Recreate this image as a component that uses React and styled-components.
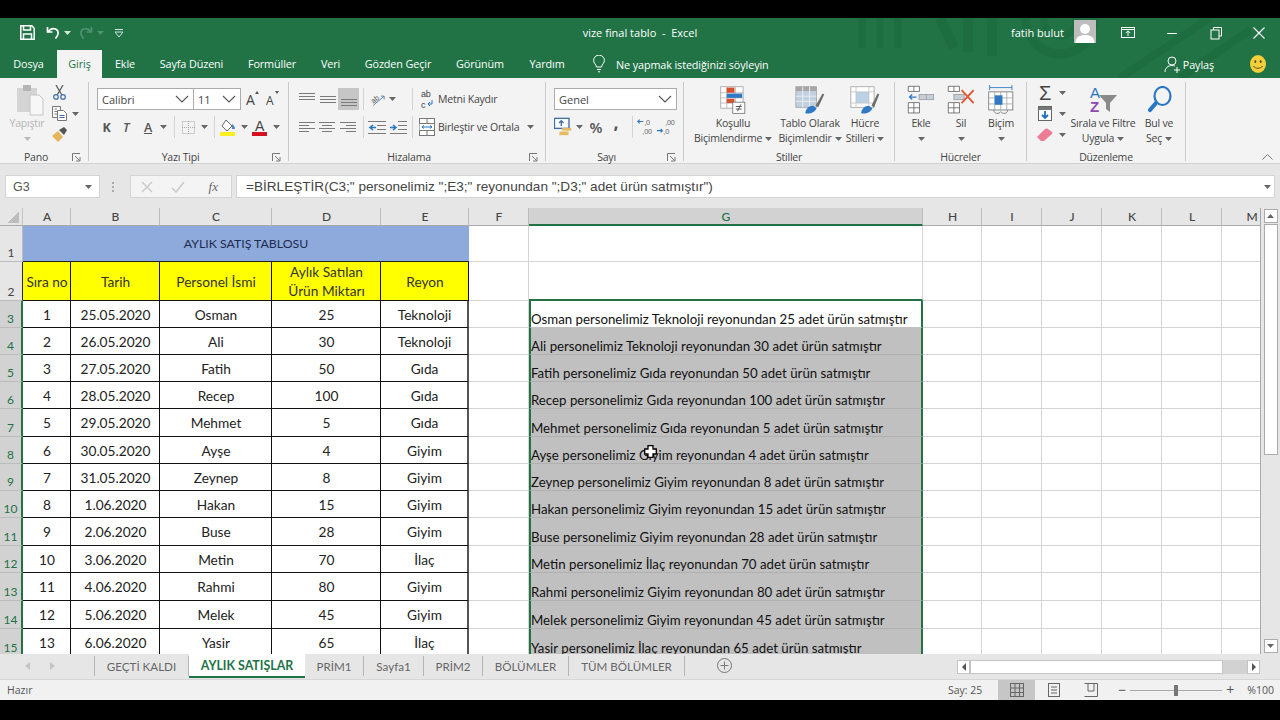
import React from 'react';
import styled, { createGlobalStyle } from 'styled-components';

const GlobalStyle = createGlobalStyle`
html, body {
    margin:0;
    padding:0;
    background:#000;
}
#root {
    width:1280px;
    height:720px;
    overflow:hidden;
}
`;

const UI_FONT = `"Open Sans", "Liberation Sans", sans-serif`;
const CELL_FONT = `Lato, "Liberation Sans", sans-serif`;
const GREEN = '#217346';

const data = [
    [1, '25.05.2020', 'Osman', 25, 'Teknoloji'],
    [2, '26.05.2020', 'Ali', 30, 'Teknoloji'],
    [3, '27.05.2020', 'Fatih', 50, 'Gıda'],
    [4, '28.05.2020', 'Recep', 100, 'Gıda'],
    [5, '29.05.2020', 'Mehmet', 5, 'Gıda'],
    [6, '30.05.2020', 'Ayşe', 4, 'Giyim'],
    [7, '31.05.2020', 'Zeynep', 8, 'Giyim'],
    [8, '1.06.2020', 'Hakan', 15, 'Giyim'],
    [9, '2.06.2020', 'Buse', 28, 'Giyim'],
    [10, '3.06.2020', 'Metin', 70, 'İlaç'],
    [11, '4.06.2020', 'Rahmi', 80, 'Giyim'],
    [12, '5.06.2020', 'Melek', 45, 'Giyim'],
    [13, '6.06.2020', 'Yasir', 65, 'İlaç'],
];

const columns = ['A', 'B', 'C', 'D', 'E', 'F', 'G', 'H', 'I', 'J', 'K', 'L', 'M'];
const headers = ['Sıra no', 'Tarih', 'Personel İsmi', <>Aylık Satılan<br />Ürün Miktarı</>, 'Reyon'];
const ribbonTabs = [
    ['Dosya', 57], ['Giriş', 45], ['Ekle', 46], ['Sayfa Düzeni', 87], ['Formüller', 74],
    ['Veri', 43], ['Gözden Geçir', 92], ['Görünüm', 72], ['Yardım', 62],
];
const sheets = [
    ['GEÇTİ KALDI', 94], ['AYLIK SATIŞLAR', 116], ['PRİM1', 59], ['Sayfa1', 60],
    ['PRİM2', 59], ['BÖLÜMLER', 86], ['TÜM BÖLÜMLER', 116],
];

/* ---- small drawings ---- */

const Caret = ({ color = '#666' }) => (
    <svg width="7" height="4" viewBox="0 0 7 4"><path d="M0 0h7L3.5 4z" fill={color} /></svg>
);

const Chevron = () => (
    <svg width="14" height="8" viewBox="0 0 14 8"><path d="M1 1l6 6 6-6" fill="none" stroke="#555" strokeWidth="1.1" /></svg>
);

const Launcher = () => (
    <svg width="9" height="9" viewBox="0 0 9 9" fill="none" stroke="#777" strokeWidth="1">
        <path d="M.5 8V.5H8" /><path d="M3 3l4.5 4.5M4 8h4V4" />
    </svg>
);

const Lines = ({ rows, w = 16, h = 16 }) => (
    <svg width={w} height={h} viewBox={`0 0 ${w} ${h}`} stroke="#7a7a7a" strokeWidth="1">
        {rows.map(([y, x1, x2]) => <path key={y} d={`M${x1} ${y}.5H${x2}`} />)}
    </svg>
);

const Indent = ({ flip }) => (
    <svg width="18" height="14" viewBox="0 0 18 14">
        <g stroke="#7a7a7a"><path d={flip ? 'M9 1.5h9M9 5.5h9M9 9.5h9M1 13.5h17' : 'M0 1.5h18M9 5.5h9M9 9.5h9M0 13.5h18'} /></g>
        <path d={flip ? 'M1 7.5h5M4 5l3 2.5L4 10' : 'M8 7.5H2M5 5L2 7.5 5 10'} fill="none" stroke="#2a76c6" strokeWidth="1.6" />
    </svg>
);

const SaveIcon = () => (
    <svg width="15" height="15" viewBox="0 0 15 15" fill="none" stroke="#fff" strokeWidth="1.5">
        <path d="M.8.8h11l2.4 2.4v11H.8z" /><path d="M3.5 1v4h7V1M3.5 14V9h8v5" />
    </svg>
);

const UndoIcon = ({ color = '#fff', flip }) => (
    <svg width="15" height="13" viewBox="0 0 15 13" fill="none" stroke={color} strokeWidth="1.7" style={flip ? { transform: 'scaleX(-1)' } : undefined}>
        <path d="M1.5 1v5h5" /><path d="M2 6c2-3 5-4 7.5-3 3.5 1.5 3.5 6 0 9.5" />
    </svg>
);

const QatMenu = () => (
    <svg width="8" height="8" viewBox="0 0 8 8"><path d="M0 .5h8" stroke="#cfe3d7" /><path d="M0 3h8L4 8z" fill="none" stroke="#cfe3d7" /></svg>
);

const Avatar = () => (
    <svg width="22" height="23" viewBox="0 0 22 23">
        <rect width="22" height="23" fill="#bdbdbd" />
        <circle cx="11" cy="9" r="5" fill="#fff" />
        <path d="M1.5 23c0-6 4-8 9.5-8s9.5 2 9.5 8z" fill="#fff" />
    </svg>
);

const WindowIcon = ({ kind }) => (
    <svg width="14" height="14" viewBox="0 0 14 14" fill="none" stroke="#fff" strokeWidth="1">
        {kind === 'ribbon' && <><rect x=".5" y="1.5" width="13" height="10" /><path d="M.5 3.5h13M7 10V5M4.8 7L7 4.8 9.2 7" /></>}
        {kind === 'min' && <path d="M2 7.5h10" />}
        {kind === 'restore' && <><rect x="2" y="4" width="8" height="9" /><path d="M4.5 4V1.5h8V10H10" /></>}
        {kind === 'close' && <path d="M1.5 1.5l11 11M12.5 1.5l-11 11" strokeWidth="1.1" />}
    </svg>
);

const BulbIcon = () => (
    <svg width="12" height="18" viewBox="0 0 12 18" fill="none" stroke="#fff" strokeWidth="1">
        <path d="M3.5 12C3 9 .6 8 .6 5.5a5.4 5.4 0 0 1 10.8 0C11.4 8 9 9 8.5 12z" /><path d="M4 14.5h4M5 16.8h2" />
    </svg>
);

const ShareIcon = () => (
    <svg width="16" height="17" viewBox="0 0 16 17" fill="none" stroke="#fff" strokeWidth="1">
        <circle cx="8" cy="5" r="4" /><path d="M1 16c0-4 3-6.5 7-6.5 1 0 2 .2 2.8.5M10 14h6M13 11v6" />
    </svg>
);

const Smile = () => (
    <svg width="16" height="18" viewBox="0 0 16 18">
        <ellipse cx="8" cy="9" rx="8" ry="9" fill="#f2cf3b" />
        <ellipse cx="5.3" cy="6.5" rx="1" ry="1.5" fill="#5d5020" /><ellipse cx="10.7" cy="6.5" rx="1" ry="1.5" fill="#5d5020" />
        <path d="M3.5 11c1.5 3 7.5 3 9 0" fill="none" stroke="#5d5020" />
    </svg>
);

const PasteIcon = () => (
    <svg width="36" height="33" viewBox="-6 0 36 33">
        <rect x="2" y="5" width="20" height="24" fill="#d4d4d4" />
        <rect x="8" y="2" width="8" height="6" fill="#b5b5b5" />
        <path d="M15 12h9l4 4v16H15z" fill="#f7f7f7" stroke="#c4c4c4" />
    </svg>
);

const ScissorsIcon = () => (
    <svg width="15" height="15" viewBox="0 0 16 17" fill="none">
        <path d="M4 0l6.5 11M12 0L5.5 11" stroke="#555" strokeWidth="1.4" />
        <circle cx="4" cy="13.5" r="2.6" stroke="#3f6fa8" strokeWidth="1.4" /><circle cx="12" cy="13.5" r="2.6" stroke="#3f6fa8" strokeWidth="1.4" />
    </svg>
);

const CopyIcon = () => (
    <svg width="15" height="15" viewBox="0 0 15 15" fill="#fff" stroke="#777">
        <path d="M.5.5h8v11h-8z" /><path d="M2.5 3H5M2.5 5.5h4M2.5 8h4" fill="none" />
        <path d="M5.5 4.5h6l3 3v7h-9z" /><path d="M7.5 9.5h5M7.5 11.5h5" fill="none" stroke="#3f6fa8" />
    </svg>
);

const BrushIcon = () => (
    <svg width="15" height="15" viewBox="0 0 15 15">
        <path d="M0 9l6-5 5 6-5 5z" fill="#e5b65c" /><path d="M7 3l5-3 3 3-3 5z" fill="#555" />
    </svg>
);

const GrowA = ({ up }) => (
    <svg width="15" height="18" viewBox="0 0 15 18">
        <text x="0" y="15" fontFamily={UI_FONT} fontSize={up ? 14 : 12} fill="#444">A</text>
        <path d={up ? 'M9 4l2-3 2 3z' : 'M9 1h4l-2 3z'} fill="#555" />
    </svg>
);

const BorderIcon = () => (
    <svg width="13" height="13" viewBox="0 0 13 13" fill="none" stroke="#a5a5a5" strokeDasharray="1 1">
        <rect x=".5" y=".5" width="12" height="12" /><path d="M6.5 0v13M0 6.5h13" />
    </svg>
);

const FillIcon = () => (
    <svg width="16" height="17" viewBox="0 0 16 17">
        <path d="M6 1l6 6-5 5-5-5z" fill="#fff" stroke="#666" /><path d="M12 5c2 1 3 3 3 5h-3z" fill="#4c87c7" />
        <rect y="13" width="15" height="4" fill="#ffef20" />
    </svg>
);

const ColorA = () => (
    <svg width="16" height="19" viewBox="0 0 16 19">
        <text x="3" y="13" fontFamily="Liberation Sans" fontSize="14" fill="#444">A</text>
        <rect y="14" width="15" height="4" fill="#d5101f" />
    </svg>
);

const OrientIcon = () => (
    <svg width="22" height="22" viewBox="-2 -3 22 22">
        <path d="M3 16L16 5M12.5 4.5h4v4" fill="none" stroke="#3f6fa8" />
        <text x="1" y="11" fontFamily="Liberation Sans" fontSize="9" fill="#555" transform="rotate(-38 6 9)">ab</text>
    </svg>
);

const WrapIcon = () => (
    <svg width="15" height="22" viewBox="0 0 15 22">
        <text x="1" y="9" fontFamily="Liberation Sans" fontSize="9" fill="#444">ab</text>
        <text x="1" y="19.5" fontFamily="Liberation Sans" fontSize="9" fill="#444">c</text>
        <path d="M12 12v4H8M10 14l-2 2 2 2" fill="none" stroke="#2a76c6" />
    </svg>
);

const MergeIcon = () => (
    <svg width="16" height="18" viewBox="0 0 16 18" fill="#fff" stroke="#777">
        <rect x=".5" y=".5" width="15" height="17" /><path d="M.5 5.5h15v7H.5M8 .5v5M8 12.5v5" />
        <path d="M3 9h10M5 7.5L3 9l2 1.5M11 7.5L13 9l-2 1.5" fill="none" stroke="#2a76c6" />
    </svg>
);

const CurrencyIcon = () => (
    <svg width="22" height="20" viewBox="0 0 22 20">
        <rect x=".5" y=".5" width="16" height="11" fill="#fff" stroke="#3f6fa8" strokeWidth="1.5" />
        <path d="M8 9V3M5.5 5.5L8 3l2.5 2.5" fill="none" stroke="#3f6fa8" strokeWidth="1.5" />
        <rect x="9" y="11" width="10" height="3" fill="#e5bb5f" /><rect x="6" y="15" width="10" height="4" fill="#e5bb5f" />
    </svg>
);

const DecimalIcon = ({ top, bottom, arrowRight }) => (
    <svg width="22" height="22" viewBox="0 0 22 22">
        <text x="9" y="9" fontFamily="Liberation Sans" fontSize="8" fill="#666">{top}</text>
        <text x="7" y="18.5" fontFamily="Liberation Sans" fontSize="8" fill="#666">{bottom}</text>
        <path d={arrowRight ? 'M0 15h6M4 13l2 2-2 2' : 'M8 5H2M4 3L2 5l2 2'} fill="none" stroke="#2a76c6" strokeWidth="1.2" />
    </svg>
);

const Sheetlet = ({ children, w = 32, h = 34 }) => (
    <svg width={w * 0.86} height={h * 0.86} viewBox={`0 0 ${w} ${h}`}>{children}</svg>
);

const ConditionalIcon = () => (
    <Sheetlet>
        <rect x="2" y="2" width="26" height="25" fill="#fff" stroke="#a6a6a6" />
        <path d="M2 9h26M2 15h26M2 21h26M9 2v25M19 2v25" stroke="#b5b5b5" />
        <rect x="9" y="3" width="9" height="6" fill="#d7512f" /><rect x="9" y="10" width="18" height="5" fill="#2f79c5" /><rect x="9" y="16" width="9" height="5" fill="#d7512f" />
        <rect x="16" y="20" width="14" height="13" fill="#fff" stroke="#777" />
        <path d="M19.5 25h7M19.5 28h7M25.5 22.5l-4 8" fill="none" stroke="#444" />
    </Sheetlet>
);

const TableIcon = () => (
    <Sheetlet w={34}>
        <rect x="1" y="2" width="24" height="24" fill="#c2cfdf" stroke="#a6a6a6" />
        <rect x="1" y="2" width="24" height="5" fill="#a6a6a6" />
        <path d="M1 13h24M1 19h24M9 2v24M17 2v24" stroke="#eef2f6" />
        <path d="M24 24L32 10l2 1-7 15z" fill="#6d6d6d" />
        <path d="M12 33c0-5 4-9 9-9l4 3c-1 4-7 7-13 6z" fill="#2f79c5" />
    </Sheetlet>
);

const CellStyleIcon = () => (
    <Sheetlet w={34}>
        <rect x="1" y="2" width="27" height="24" fill="#fff" stroke="#a6a6a6" />
        <rect x="7" y="8" width="15" height="13" fill="#bcd0e6" />
        <path d="M7 2v24M22 2v24M1 8h27M1 21h27" stroke="#c4c4c4" />
        <path d="M25 24L32 10l2 1-6 15z" fill="#6d6d6d" />
        <path d="M13 33c0-5 4-9 9-9l4 3c-1 4-7 7-13 6z" fill="#2f79c5" />
    </Sheetlet>
);

const InsertIcon = () => (
    <Sheetlet>
        <path d="M1.5 1.5h13v6h-13zM8 1.5v6M1.5 20.5h13v12h-13zM1.5 26.5h13M8 20.5v12" fill="#fff" stroke="#666" />
        <rect x="14" y="11" width="17" height="6" fill="#c7ced6" stroke="#9aa2aa" />
        <path d="M22.5 11v6" stroke="#9aa2aa" />
        <path d="M11 14H3M6 11l-3 3 3 3" fill="none" stroke="#2a76c6" strokeWidth="1.5" />
    </Sheetlet>
);

const DeleteIcon = () => (
    <Sheetlet>
        <path d="M1.5 1.5h13v6h-13zM8 1.5v6M1.5 20.5h13v12h-13zM1.5 26.5h13M8 20.5v12" fill="#fff" stroke="#666" />
        <rect x="8" y="11" width="12" height="6" fill="#c7ced6" stroke="#9aa2aa" />
        <path d="M17 6l14 15M31 6L17 21" stroke="#e2572f" strokeWidth="2.2" />
    </Sheetlet>
);

const FormatIcon = () => (
    <Sheetlet>
        <path d="M3 3h26M3 0v6M29 0v6" stroke="#2a76c6" />
        <rect x="2" y="8" width="28" height="21" fill="#fff" stroke="#777" />
        <path d="M9 8v21M16 8v21M23 8v21M2 15h28M2 22h28" stroke="#a9a9a9" />
        <rect x="9" y="12" width="9" height="11" fill="#2f79c5" />
        <path d="M8 29c0 5 6 5 8 2 2 3 8 3 8-2" fill="none" stroke="#777" />
    </Sheetlet>
);

const FillDown = () => (
    <svg width="14" height="15" viewBox="0 0 14 15">
        <rect x=".5" y=".5" width="13" height="14" fill="#fff" stroke="#666" />
        <rect x="1" y="1" width="12" height="3" fill="#777" />
        <path d="M7 5v7M4 9l3 3 3-3" fill="none" stroke="#1e6fc2" strokeWidth="1.8" />
    </svg>
);

const Eraser = () => (
    <svg width="16" height="14" viewBox="0 0 16 14"><path d="M0 9l8-8q2-1 3 0l4 3q1 1 0 2l-8 7H4z" fill="#ec7d95" /></svg>
);

const SortIcon = () => (
    <svg width="28" height="32" viewBox="0 -2 28 32">
        <path d="M10 9h18l-7 8v9l-4-3v-6z" fill="#8a8a8a" />
        <text x="1" y="12" fontFamily="Liberation Sans" fontSize="15" fill="#2a76c6">A</text>
        <text x="1" y="26" fontFamily="Liberation Sans" fontSize="15" fontWeight="700" fill="#8b49b0">Z</text>
    </svg>
);

const FindIcon = () => (
    <svg width="25" height="27" viewBox="0 0 25 27" fill="none">
        <ellipse cx="15.5" cy="10" rx="8" ry="9" stroke="#2a76c6" strokeWidth="2.2" />
        <path d="M9 17l-6 7" stroke="#2a76c6" strokeWidth="4.2" strokeLinecap="round" />
    </svg>
);

const CrossCursor = () => (
    <svg width="13" height="13" viewBox="0 0 13 13">
        <path d="M4 .7h5V4h3.3v5H9v3.3H4V9H.7V4H4z" fill="#fff" stroke="#000" strokeWidth="1.3" />
    </svg>
);

const ViewIcon = ({ kind }) => (
    <svg width="14" height="14" viewBox="0 0 14 14" fill="none" stroke="#666">
        {kind === 'grid' && <><rect x=".5" y=".5" width="13" height="13" /><path d="M5 0v14M9.5 0v14M0 5h14M0 9.5h14" /></>}
        {kind === 'page' && <><rect x="1.5" y=".5" width="11" height="13" /><path d="M4 4h6M4 7h6M4 10h6" /></>}
        {kind === 'break' && <><path d="M.5.5h13v13H.5" /><path d="M4 0v8h6V0" /></>}
    </svg>
);

/* ---- row of the sheet ---- */

const SheetRow = ({ row, index }) => {
    const [no, date, name, count, dept] = row;
    return (
        <>
            <RowHead $sel>{index + 3}</RowHead>
            <DataCell>{no}</DataCell>
            <DataCell>{date}</DataCell>
            <DataCell>{name}</DataCell>
            <DataCell>{count}</DataCell>
            <DataCell $edge>{dept}</DataCell>
            <Cell />
            <ResultCell $first={index === 0}>
                {name} personelimiz {dept} reyonundan {count} adet ürün satmıştır
            </ResultCell>
            {columns.slice(7).map(c => <Cell key={c} />)}
        </>
    );
};

const App = () => (
    <Page>
        <GlobalStyle />
        <Header>
            <Decoration width="420" height="60" viewBox="0 0 420 60" fill="none" stroke="#1e6d41">
                <path d="M12 0v30M30 0v30M48 0v30" strokeWidth="7" />
                <path d="M90 0l14 30M118 0v34M142 0v38" strokeWidth="10" />
                <circle cx="210" cy="2" r="34" strokeWidth="9" /><circle cx="210" cy="2" r="16" strokeWidth="7" />
                <path d="M270 60L360 0M330 60l70-48" strokeWidth="8" />
            </Decoration>
            <TitleRow>
                <Qat>
                    <Slot $w={20} $ml={17}><SaveIcon /></Slot>
                    <Slot $w={20} $ml={6}><UndoIcon /></Slot>
                    <Slot $w={8}><Caret color="#d9e8df" /></Slot>
                    <Slot $w={20} $ml={4}><UndoIcon color="#4f9270" flip /></Slot>
                    <Slot $w={10}><Caret color="#4f9270" /></Slot>
                    <Slot $w={10} $ml={9}><QatMenu /></Slot>
                </Qat>
                <DocTitle>vize final tablo  -  Excel</DocTitle>
                <UserArea>
                    <UserName>fatih bulut</UserName>
                    <AvatarBox><Avatar /></AvatarBox>
                    <Slot $w={44} $ml={10}><WindowIcon kind="ribbon" /></Slot>
                    <Slot $w={44}><WindowIcon kind="min" /></Slot>
                    <Slot $w={44}><WindowIcon kind="restore" /></Slot>
                    <Slot $w={42}><WindowIcon kind="close" /></Slot>
                </UserArea>
            </TitleRow>
            <TabRow>
                {ribbonTabs.map(([name, w]) => <RibbonTab key={name} $w={w} $active={name === 'Giriş'}>{name}</RibbonTab>)}
                <Slot $w={12} $ml={15}><BulbIcon /></Slot>
                <TellMe>Ne yapmak istediğinizi söyleyin</TellMe>
                <Share><ShareIcon /><span>Paylaş</span></Share>
                <Slot $w={16} $ml={36}><Smile /></Slot>
            </TabRow>
        </Header>

        <Ribbon>
            <Group $w={89}>
                <GroupBody>
                    <BigTool $w={46} $ml={4}>
                        <BigIcon><PasteIcon /></BigIcon>
                        <BigLabel $faded>Yapıştır</BigLabel>
                        <BigLabel><Caret color="#bbb" /></BigLabel>
                    </BigTool>
                    <SmallColumn>
                        <SmallRow><Slot $w={18}><ScissorsIcon /></Slot></SmallRow>
                        <SmallRow><Slot $w={18}><CopyIcon /></Slot><Slot $w={8} $ml={3}><Caret /></Slot></SmallRow>
                        <SmallRow><Slot $w={18}><BrushIcon /></Slot></SmallRow>
                    </SmallColumn>
                </GroupBody>
                <GroupFoot><Caption>Pano</Caption><LaunchSlot><Launcher /></LaunchSlot></GroupFoot>
            </Group>

            <Group $w={200}>
                <ToolStack $pl={8}>
                    <ToolRow>
                        <Select $w={97}>Calibri<Chevron /></Select>
                        <Select $w={48} $ml={-1}>11<Chevron /></Select>
                        <Slot $w={20} $ml={2}><GrowA up /></Slot>
                        <Slot $w={20}><GrowA /></Slot>
                    </ToolRow>
                    <ToolRow>
                        <Slot $w={19}><FontMark $b>K</FontMark></Slot>
                        <Slot $w={20}><FontMark $i>T</FontMark></Slot>
                        <Slot $w={20} $ml={2}><FontMark $u>A</FontMark></Slot>
                        <Slot $w={10}><Caret /></Slot>
                        <Divider $ml={6} />
                        <Slot $w={20} $ml={3}><BorderIcon /></Slot>
                        <Slot $w={10} $ml={1}><Caret /></Slot>
                        <Divider $ml={5} />
                        <Slot $w={20} $ml={3}><FillIcon /></Slot>
                        <Slot $w={10} $ml={1}><Caret /></Slot>
                        <Slot $w={20} $ml={1}><ColorA /></Slot>
                        <Slot $w={10} $ml={1}><Caret /></Slot>
                    </ToolRow>
                </ToolStack>
                <GroupFoot><Caption>Yazı Tipi</Caption><LaunchSlot><Launcher /></LaunchSlot></GroupFoot>
            </Group>

            <Group $w={257}>
                <ToolStack $pl={8}>
                    <ToolRow>
                        <Slot $w={20}><Lines rows={[[2, 0, 16], [5, 0, 16], [8, 0, 16]]} /></Slot>
                        <Slot $w={21}><Lines rows={[[5, 0, 16], [8, 0, 16], [11, 0, 16]]} /></Slot>
                        <Slot $w={21} $active><Lines rows={[[8, 0, 16], [11, 0, 16], [14, 0, 16]]} /></Slot>
                        <Divider $ml={4} />
                        <Slot $w={18} $ml={5}><OrientIcon /></Slot>
                        <Slot $w={10}><Caret /></Slot>
                        <Divider $ml={15} />
                        <Slot $w={20} $ml={4}><WrapIcon /></Slot>
                        <ToolText $ml={1}>Metni Kaydır</ToolText>
                    </ToolRow>
                    <ToolRow>
                        <Slot $w={20}><Lines rows={[[3, 0, 16], [6, 0, 10], [9, 0, 16], [12, 0, 10]]} /></Slot>
                        <Slot $w={20}><Lines rows={[[3, 0, 16], [6, 3, 13], [9, 0, 16], [12, 3, 13]]} /></Slot>
                        <Slot $w={20} $ml={1}><Lines rows={[[3, 0, 16], [6, 6, 16], [9, 0, 16], [12, 6, 16]]} /></Slot>
                        <Divider $ml={5} />
                        <Slot $w={20} $ml={3}><Indent /></Slot>
                        <Slot $w={20} $ml={1}><Indent flip /></Slot>
                        <Divider $ml={4} />
                        <Slot $w={20} $ml={4}><MergeIcon /></Slot>
                        <ToolText $ml={1}>Birleştir ve Ortala</ToolText>
                        <Slot $w={10} $ml={6}><Caret /></Slot>
                    </ToolRow>
                </ToolStack>
                <GroupFoot><Caption>Hizalama</Caption><LaunchSlot><Launcher /></LaunchSlot></GroupFoot>
            </Group>

            <Group $w={138}>
                <ToolStack $pl={8}>
                    <ToolRow>
                        <Select $w={123}>Genel<Chevron /></Select>
                    </ToolRow>
                    <ToolRow>
                        <Slot $w={20}><CurrencyIcon /></Slot>
                        <Slot $w={10}><Caret /></Slot>
                        <Slot $w={20} $ml={2}><Percent>%</Percent></Slot>
                        <Slot $w={20}><Percent $comma>,</Percent></Slot>
                        <Divider $ml={6} />
                        <Slot $w={20} $ml={3}><DecimalIcon top=",0" bottom=",00" /></Slot>
                        <Slot $w={20} $ml={1}><DecimalIcon top=",00" bottom=",0" arrowRight /></Slot>
                    </ToolRow>
                </ToolStack>
                <GroupFoot><Caption>Sayı</Caption><LaunchSlot><Launcher /></LaunchSlot></GroupFoot>
            </Group>

            <Group $w={211}>
                <GroupBody $pl={9}>
                    <BigTool $w={80}>
                        <BigIcon><ConditionalIcon /></BigIcon>
                        <BigLabel>Koşullu</BigLabel>
                        <BigLabel>Biçimlendirme <Caret /></BigLabel>
                    </BigTool>
                    <BigTool $w={70} $ml={2}>
                        <BigIcon><TableIcon /></BigIcon>
                        <BigLabel>Tablo Olarak</BigLabel>
                        <BigLabel>Biçimlendir <Caret /></BigLabel>
                    </BigTool>
                    <BigTool $w={38} $ml={1}>
                        <BigIcon><CellStyleIcon /></BigIcon>
                        <BigLabel>Hücre</BigLabel>
                        <BigLabel>Stilleri <Caret /></BigLabel>
                    </BigTool>
                </GroupBody>
                <GroupFoot><Caption>Stiller</Caption></GroupFoot>
            </Group>

            <Group $w={132}>
                <GroupBody $pl={6}>
                    <BigTool $w={40}>
                        <BigIcon><InsertIcon /></BigIcon>
                        <BigLabel>Ekle</BigLabel>
                        <BigLabel><Caret /></BigLabel>
                    </BigTool>
                    <BigTool $w={40}>
                        <BigIcon><DeleteIcon /></BigIcon>
                        <BigLabel>Sil</BigLabel>
                        <BigLabel><Caret /></BigLabel>
                    </BigTool>
                    <BigTool $w={40}>
                        <BigIcon><FormatIcon /></BigIcon>
                        <BigLabel>Biçim</BigLabel>
                        <BigLabel><Caret /></BigLabel>
                    </BigTool>
                </GroupBody>
                <GroupFoot><Caption>Hücreler</Caption></GroupFoot>
            </Group>

            <Group $w={159}>
                <GroupBody $pl={8}>
                    <SmallColumn>
                        <SmallRow><Slot $w={20}><Sigma>Σ</Sigma></Slot><Slot $w={14}><Caret /></Slot></SmallRow>
                        <SmallRow><Slot $w={20}><FillDown /></Slot><Slot $w={14}><Caret /></Slot></SmallRow>
                        <SmallRow><Slot $w={20}><Eraser /></Slot><Slot $w={14}><Caret /></Slot></SmallRow>
                    </SmallColumn>
                    <BigTool $w={68}>
                        <BigIcon><SortIcon /></BigIcon>
                        <BigLabel>Sırala ve Filtre</BigLabel>
                        <BigLabel>Uygula <Caret /></BigLabel>
                    </BigTool>
                    <BigTool $w={44}>
                        <BigIcon><FindIcon /></BigIcon>
                        <BigLabel>Bul ve</BigLabel>
                        <BigLabel>Seç <Caret /></BigLabel>
                    </BigTool>
                </GroupBody>
                <GroupFoot><Caption>Düzenleme</Caption></GroupFoot>
            </Group>

            <Collapse>
                <svg width="11" height="6" viewBox="0 0 11 6"><path d="M.5 5.5l5-5 5 5" fill="none" stroke="#777" /></svg>
            </Collapse>
        </Ribbon>

        <FormulaBar>
            <NameBox>G3<Caret /></NameBox>
            <Grip />
            <FxBox>
                <svg width="12" height="12" viewBox="0 0 12 12"><path d="M1 1l10 10M11 1L1 11" stroke="#c9c9c9" strokeWidth="1.4" /></svg>
                <svg width="14" height="12" viewBox="0 0 14 12"><path d="M1 7l4 4 8-10" fill="none" stroke="#c9c9c9" strokeWidth="1.4" /></svg>
                <FxMark>fx</FxMark>
            </FxBox>
            <FormulaInput>
                <span>=BİRLEŞTİR(C3;" personelimiz ";E3;" reyonundan ";D3;" adet ürün satmıştır")</span>
                <Caret color="#666" />
            </FormulaInput>
        </FormulaBar>

        <SheetArea>
            <SheetGrid>
                <Corner />
                {columns.map(c => <ColHead key={c} $sel={c === 'G'}>{c}</ColHead>)}

                <RowHead>1</RowHead>
                <TitleCell>AYLIK SATIŞ TABLOSU</TitleCell>
                {columns.slice(5).map(c => <Cell key={c} />)}

                <RowHead $dark>2</RowHead>
                {headers.map((h, i) => <HeadCell key={i}>{h}</HeadCell>)}
                <Cell />
                <Cell $selTop />
                {columns.slice(7).map(c => <Cell key={c} />)}

                {data.map((row, i) => <SheetRow key={row[0]} row={row} index={i} />)}
                <Pointer><CrossCursor /></Pointer>
            </SheetGrid>
            <VScroll>
                <ScrollBtn><Caret color="#666" /></ScrollBtn>
                <VThumb />
                <ScrollBtn $push><Caret color="#666" /></ScrollBtn>
            </VScroll>
        </SheetArea>

        <TabsBar>
            <SheetNav>
                <svg width="5" height="8" viewBox="0 0 5 8"><path d="M5 0v8L0 4z" fill="#c4c4c4" /></svg>
                <svg width="5" height="8" viewBox="0 0 5 8"><path d="M0 0v8l5-4z" fill="#c4c4c4" /></svg>
            </SheetNav>
            {sheets.map(([name, w]) => <SheetTab key={name} $w={w} $active={name === 'AYLIK SATIŞLAR'}>{name}</SheetTab>)}
            <AddSheet>
                <svg width="15" height="15" viewBox="0 0 15 15" fill="none" stroke="#777">
                    <circle cx="7.5" cy="7.5" r="7" /><path d="M7.5 3.5v8M3.5 7.5h8" />
                </svg>
            </AddSheet>
            <HScroll>
                <HBtn><svg width="4" height="8" viewBox="0 0 4 8"><path d="M4 0v8L0 4z" fill="#555" /></svg></HBtn>
                <HThumb />
                <HBtn><svg width="4" height="8" viewBox="0 0 4 8"><path d="M0 0v8l4-4z" fill="#555" /></svg></HBtn>
            </HScroll>
        </TabsBar>

        <StatusBar>
            <StatusText>Hazır</StatusText>
            <StatusCount>Say: 25</StatusCount>
            <ViewBtn $active><ViewIcon kind="grid" /></ViewBtn>
            <ViewBtn><ViewIcon kind="page" /></ViewBtn>
            <ViewBtn><ViewIcon kind="break" /></ViewBtn>
            <ZoomMark $ml={9}>−</ZoomMark>
            <ZoomTrack><ZoomKnob /></ZoomTrack>
            <ZoomMark>+</ZoomMark>
            <StatusText $ml={13}>%100</StatusText>
        </StatusBar>
    </Page>
);

const Page = styled.div`
width:1280px;
height:720px;
padding:18px 0 20px;
box-sizing:border-box;
background:#000;
display:flex;
flex-direction:column;
font-family:${UI_FONT};
overflow:hidden;
`;

const Header = styled.div`
position:relative;
background:${GREEN};
color:white;
flex:none;
overflow:hidden;
`;

const Decoration = styled.svg`
position:absolute;
left:850px;
top:0;
`;

const TitleRow = styled.div`
position:relative;
box-sizing:border-box;
height:32px;
padding-bottom:3px;
display:grid;
grid-template-columns:1fr auto 1fr;
align-items:center;
`;

const Qat = styled.div`
display:flex;
align-items:center;
`;

const DocTitle = styled.div`
font-size:11px;
white-space:pre;
color:#fff;
`;

const UserArea = styled.div`
display:flex;
justify-content:flex-end;
align-items:center;
`;

const UserName = styled.div`
font-size:11px;
`;

const AvatarBox = styled.div`
height:23px;
margin:-2px 0 0 10px;
`;

const Slot = styled.div`
flex:none;
width:${p => p.$w}px;
height:22px;
margin-left:${p => p.$ml || 0}px;
display:flex;
align-items:center;
justify-content:center;
background:${p => p.$active ? '#c6c6c6' : 'transparent'};
`;

const TabRow = styled.div`
position:relative;
height:28px;
padding-right:14px;
display:flex;
align-items:center;
font-size:10.8px;
letter-spacing:-0.1px;
`;

const RibbonTab = styled.div`
flex:none;
width:${p => p.$w}px;
height:28px;
line-height:27px;
text-align:center;
color:${p => p.$active ? GREEN : '#fff'};
background:${p => p.$active ? '#f3f3f3' : 'transparent'};
`;

const TellMe = styled.div`
margin-left:11px;
`;

const Share = styled.div`
margin-left:auto;
display:flex;
align-items:center;
gap:3px;
`;

const Ribbon = styled.div`
flex:none;
height:86px;
box-sizing:border-box;
padding-top:4px;
display:flex;
background:#f3f3f3;
border-bottom:1px solid #d2d2d2;
color:#444;
font-size:10.5px;
letter-spacing:-0.2px;
`;

const Group = styled.div`
flex:none;
box-sizing:border-box;
width:${p => p.$w}px;
height:79px;
display:flex;
flex-direction:column;
border-right:1px solid #c9c9c9;
`;

const GroupBody = styled.div`
flex:1;
display:flex;
padding-left:${p => p.$pl || 0}px;
`;

const ToolStack = styled.div`
flex:1;
display:flex;
flex-direction:column;
gap:6px;
padding:6px 0 0 ${p => p.$pl}px;
`;

const ToolRow = styled.div`
display:flex;
align-items:center;
height:22px;
`;

const GroupFoot = styled.div`
height:13px;
margin-bottom:-3px;
display:flex;
align-items:center;
`;

const Caption = styled.div`
flex:1;
text-align:center;
line-height:13px;
color:#444;
`;

const LaunchSlot = styled.div`
flex:none;
width:16px;
display:flex;
`;

const BigTool = styled.div`
flex:none;
width:${p => p.$w}px;
margin-left:${p => p.$ml || 0}px;
display:flex;
flex-direction:column;
align-items:center;
padding-top:1px;
`;

const BigIcon = styled.div`
height:33px;
display:flex;
align-items:center;
justify-content:center;
`;

const BigLabel = styled.div`
height:15px;
line-height:15px;
white-space:nowrap;
display:flex;
align-items:center;
gap:3px;
color:${p => p.$faded ? '#b5b5b5' : '#444'};
`;

const SmallColumn = styled.div`
flex:none;
display:flex;
flex-direction:column;
`;

const SmallRow = styled.div`
height:21px;
display:flex;
align-items:center;
`;

const Select = styled.div`
flex:none;
box-sizing:border-box;
width:${p => p.$w}px;
height:22px;
margin-left:${p => p.$ml || 0}px;
padding:0 4px;
background:#fff;
border:1px solid #ababab;
display:flex;
align-items:center;
justify-content:space-between;
font-size:11px;
letter-spacing:0;
color:#444;
`;

const FontMark = styled.span`
font-family:${UI_FONT};
font-size:12.5px;
color:#555;
font-weight:${p => p.$b ? 700 : 600};
font-style:${p => p.$i ? 'italic' : 'normal'};
text-decoration:${p => p.$u ? 'underline' : 'none'};
`;

const Divider = styled.div`
flex:none;
width:1px;
height:22px;
margin-left:${p => p.$ml || 0}px;
background:#d4d4d4;
`;

const ToolText = styled.span`
margin-left:${p => p.$ml || 0}px;
white-space:nowrap;
`;

const Percent = styled.span`
font-size:15px;
font-weight:${p => p.$comma ? 800 : 600};
color:#555;
margin-top:${p => p.$comma ? '-8px' : 0};
`;

const Sigma = styled.span`
font-family:"Liberation Sans", sans-serif;
font-size:20px;
line-height:20px;
color:#444;
`;

const Collapse = styled.div`
flex:1;
height:79px;
display:flex;
align-items:flex-end;
justify-content:flex-end;
padding:0 7px 1px 0;
box-sizing:border-box;
`;

const FormulaBar = styled.div`
flex:none;
height:44px;
box-sizing:border-box;
padding:11px 5px 10px;
display:flex;
background:#e6e6e6;
`;

const NameBox = styled.div`
flex:none;
box-sizing:border-box;
width:95px;
height:23px;
padding:0 7px;
background:#fff;
border:1px solid #d4d4d4;
display:flex;
align-items:center;
justify-content:space-between;
font-family:"Liberation Sans", sans-serif;
font-size:12.5px;
color:#555;
`;

const Grip = styled.div`
flex:none;
width:2px;
height:10px;
margin:7px 14px 0 12px;
border-left:2px dotted #aaa;
`;

const FxBox = styled.div`
flex:none;
box-sizing:border-box;
width:102px;
height:23px;
padding:0 11px 0 10px;
background:#f4f4f4;
border:1px solid #d4d4d4;
display:flex;
align-items:center;
justify-content:space-between;
`;

const FxMark = styled.span`
font-family:"Liberation Serif", serif;
font-style:italic;
font-size:13px;
color:#666;
margin-right:2px;
margin-left:6px;
`;

const FormulaInput = styled.div`
flex:1;
box-sizing:border-box;
height:23px;
margin-left:4px;
padding:0 3px 0 9px;
background:#fff;
border:1px solid #d4d4d4;
display:flex;
align-items:center;
justify-content:space-between;
font-family:"Liberation Sans", sans-serif;
font-size:13.6px;
color:#444;
white-space:pre;
`;

const SheetArea = styled.div`
flex:none;
height:446px;
display:flex;
background:#e6e6e6;
`;

const SheetGrid = styled.div`
position:relative;
flex:none;
width:1261px;
height:446px;
display:grid;
grid-template-columns:23px 48px 89px 112px 109px 88px 60px 394px 59px 60px 60px 60px 60px 60px;
grid-template-rows:18px 36px 39px 27px 27px 27px 27px 28px 27px 27px 27px 28px 27px 28px 28px 28px;
overflow:hidden;
background:#fff;
border-right:1px solid #a9a9a9;
box-sizing:border-box;
font-family:${CELL_FONT};
font-size:13.7px;
color:#111;
`;

const Corner = styled.div`
background:
    linear-gradient(135deg, #e6e6e6 50%, #bdbdbd 50%) no-repeat 8px 4px / 11px 11px,
    #e6e6e6;
border-right:1px solid #c4c4c4;
border-bottom:1px solid #ababab;
`;

const ColHead = styled.div`
box-sizing:border-box;
display:flex;
align-items:center;
justify-content:center;
padding-left:1px;
font-size:12px;
font-weight:500;
background:${p => p.$sel ? '#d2d2d2' : '#e6e6e6'};
color:${p => p.$sel ? GREEN : '#444'};
border-right:1px solid #bcbcbc;
border-bottom:${p => p.$sel ? `2px solid ${GREEN}` : '1px solid #ababab'};
`;

const RowHead = styled.div`
box-sizing:border-box;
display:flex;
align-items:flex-end;
justify-content:center;
padding-bottom:1px;
font-size:12px;
line-height:14px;
background:${p => p.$sel ? '#d2d2d2' : '#e6e6e6'};
color:${p => p.$sel ? GREEN : '#444'};
border-bottom:1px solid #bcbcbc;
border-right:${p => p.$sel ? `2px solid ${GREEN}` : p.$dark ? '1px solid #222' : '1px solid #bcbcbc'};
`;

const Cell = styled.div`
box-sizing:border-box;
border-right:1px solid #d4d4d4;
border-bottom:${p => p.$selTop ? `2px solid ${GREEN}` : '1px solid #d4d4d4'};
`;

const TitleCell = styled.div`
grid-column:span 5;
box-sizing:border-box;
display:flex;
align-items:center;
justify-content:center;
font-size:12.3px;
color:#1d2b4f;
background:#8ea9db;
border-bottom:1px solid #222;
`;

const HeadCell = styled.div`
box-sizing:border-box;
display:flex;
align-items:center;
justify-content:center;
text-align:center;
padding:0 0 0 1px;
line-height:19px;
background:#ffff00;
color:#333;
border-right:1px solid #111;
border-bottom:1px solid #111;
`;

const DataCell = styled.div`
box-sizing:border-box;
display:flex;
align-items:center;
justify-content:center;
padding:0.5px 0 0 1px;
color:#222;
border-right:${p => p.$edge ? '2px solid #555' : '1px solid #111'};
border-bottom:1px solid #111;
`;

const ResultCell = styled.div`
box-sizing:border-box;
display:flex;
align-items:flex-end;
line-height:16px;
font-size:13.25px;
white-space:nowrap;
color:#111;
background:${p => p.$first ? '#fff' : '#c0c0c0'};
border-left:2px solid ${GREEN};
border-right:2px solid ${GREEN};
border-bottom:1px solid ${p => p.$first ? '#c0c0c0' : '#b0b0b0'};
`;

const Pointer = styled.div`
position:absolute;
left:644px;
top:237px;
line-height:0;
`;

const VScroll = styled.div`
flex:1;
display:flex;
flex-direction:column;
align-items:center;
padding-top:1px;
`;

const ScrollBtn = styled.div`
box-sizing:border-box;
flex:none;
width:14px;
height:14px;
margin-top:${p => p.$push ? 'auto' : 0};
margin-bottom:${p => p.$push ? '1px' : 0};
background:#fff;
border:1px solid #ababab;
display:flex;
align-items:center;
justify-content:center;
transform:${p => p.$push ? 'none' : 'scaleY(-1)'};
`;

const VThumb = styled.div`
box-sizing:border-box;
flex:none;
width:14px;
height:231px;
margin-top:1px;
background:#fff;
border:1px solid #ababab;
`;

const TabsBar = styled.div`
flex:none;
box-sizing:border-box;
height:26px;
display:flex;
background:#e6e6e6;
border-bottom:1px solid #d6d6d6;
font-family:${CELL_FONT};
font-size:11.6px;
`;

const SheetNav = styled.div`
flex:none;
box-sizing:border-box;
width:95px;
height:20px;
margin-top:2px;
padding:0 39px 0 25px;
display:flex;
align-items:center;
justify-content:space-between;
border-right:1px solid #b5b5b5;
`;

const SheetTab = styled.div`
flex:none;
box-sizing:border-box;
width:${p => p.$w}px;
height:${p => p.$active ? '24px' : '20px'};
margin-top:${p => p.$active ? '0' : '2px'};
padding-top:${p => p.$active ? '1px' : '0'};
display:flex;
align-items:center;
justify-content:center;
white-space:nowrap;
color:${p => p.$active ? GREEN : '#666'};
font-size:${p => p.$active ? '12.4px' : 'inherit'};
font-weight:${p => p.$active ? 700 : 400};
background:${p => p.$active ? '#fff' : 'transparent'};
border-bottom:${p => p.$active ? `2px solid ${GREEN}` : '0'};
border-right:${p => p.$active ? '0' : '1px solid #b5b5b5'};
`;

const AddSheet = styled.div`
flex:none;
margin:4px 0 0 32px;
line-height:0;
`;

const HScroll = styled.div`
flex:none;
box-sizing:border-box;
width:303px;
height:14px;
margin:6px 0 0 225px;
display:flex;
background:#d2d2d2;
justify-content:space-between;
`;

const HBtn = styled.div`
box-sizing:border-box;
flex:none;
width:13px;
background:#fff;
border:1px solid #c4c4c4;
display:flex;
align-items:center;
justify-content:center;
`;

const HThumb = styled.div`
flex:none;
width:253px;
margin-right:auto;
background:#fff;
border:1px solid #c4c4c4;
box-sizing:border-box;
`;

const StatusBar = styled.div`
flex:none;
box-sizing:border-box;
height:20px;
padding:0 6px 0 7px;
display:flex;
align-items:center;
background:#f1f1f1;
font-size:10.5px;
color:#555;
`;

const StatusText = styled.div`
margin-left:${p => p.$ml || 0}px;
`;

const StatusCount = styled.div`
margin-left:auto;
margin-right:16px;
`;

const ViewBtn = styled.div`
flex:none;
width:37px;
height:20px;
display:flex;
align-items:center;
justify-content:center;
background:${p => p.$active ? '#c6c6c6' : 'transparent'};
`;

const ZoomMark = styled.div`
flex:none;
font-size:14px;
line-height:14px;
margin-left:${p => p.$ml || 0}px;
`;

const ZoomTrack = styled.div`
position:relative;
flex:none;
width:92px;
height:1px;
margin:0 4px;
background:#a9a9a9;
`;

const ZoomKnob = styled.div`
position:absolute;
left:44px;
top:-5px;
width:4px;
height:11px;
background:#777;
`;

export default App;
